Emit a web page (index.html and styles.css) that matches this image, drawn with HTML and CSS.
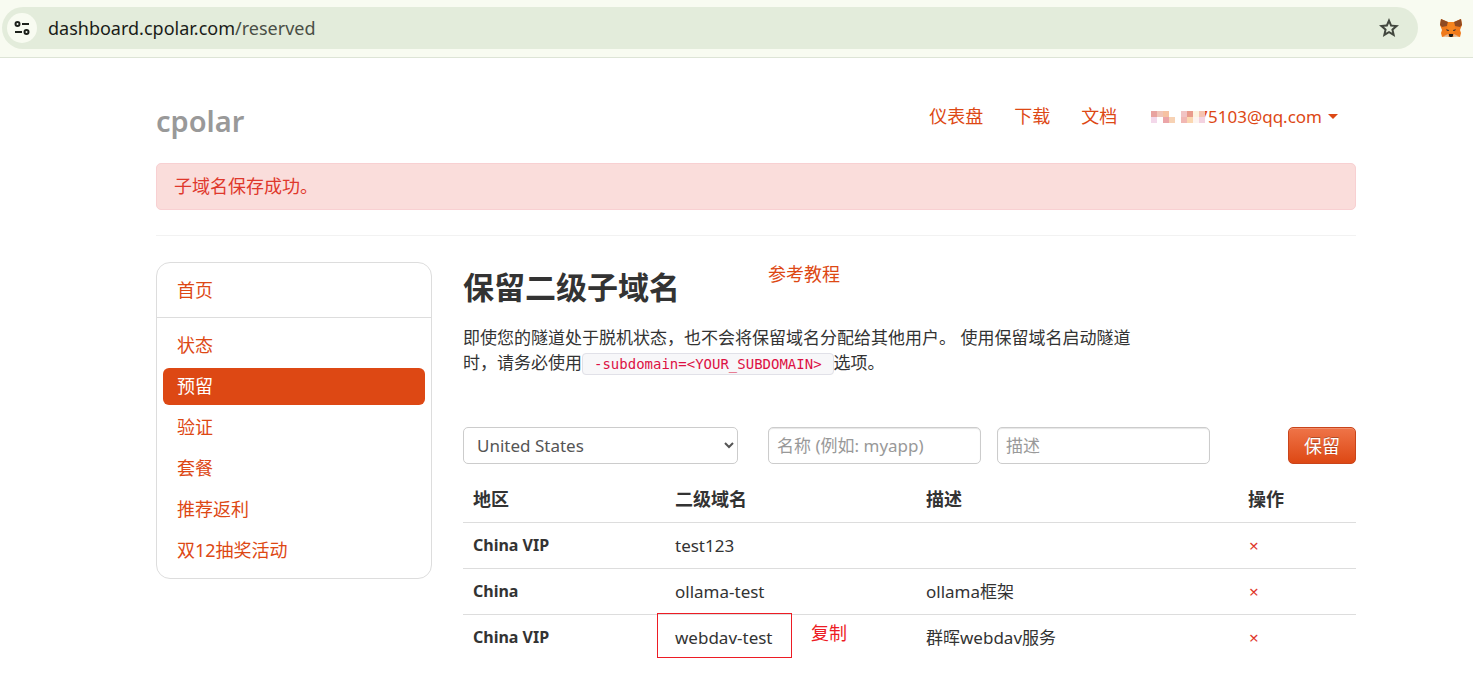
FILE: index.html
```html
<!DOCTYPE html>
<html lang="zh-CN">
<head>
  <meta charset="UTF-8">
  <title>cpolar - 保留二级子域名</title>
  <link rel="stylesheet" href="styles.css">
</head>
<body>
  <div class="browser-bar">
    <div class="address">
      <button type="button" class="site-info" aria-label="查看网站信息">
        <svg width="16" height="16" viewBox="0 0 16 16" fill="none" stroke="#1d211b" stroke-width="2">
          <circle cx="3.5" cy="4" r="2"/>
          <path d="M8 4h7M1 12h7"/>
          <circle cx="12.5" cy="12" r="2"/>
        </svg>
      </button>
      <span class="url">dashboard.cpolar.com<span class="path">/reserved</span></span>
      <button type="button" class="star" aria-label="添加书签">
        <svg width="24" height="24" viewBox="0 0 24 24" fill="#43483f">
          <path d="M8.85 16.83L12 14.93l3.15 1.92-.83-3.6 2.78-2.4-3.65-.32L12 7.13l-1.45 3.37-3.65.33 2.78 2.42zM5.83 21l1.62-7.03L2 9.25l7.2-.63L12 2l2.8 6.63 7.2.62-5.45 4.73L18.18 21 12 17.28z"/>
        </svg>
      </button>
    </div>
    <svg class="fox" width="22" height="20" viewBox="0 0 22 20">
      <path fill="#f07a1c" d="M1 1l7 3h6l7-3 1 6-2 5 1 3-1 4-5-1-2 1H9l-2-1-5 1-1-4 1-3-2-5z"/>
      <path fill="#8f4a22" d="M1 1l7 3-1 4-5 1-2-2zM21 1l-7 3 1 4 5 1 2-2z"/>
      <path fill="#f5841f" d="M8 4h6l1 7-2 4H9l-2-4z"/>
      <path fill="#e3b48f" d="M8 16l1 2-2 1-3-1zM14 16l-1 2 2 1 3-1z"/>
      <path fill="#5a3d30" d="M6 11l3 1v1H7zM16 11l-3 1v1h2z"/>
      <path fill="#1f1a17" d="M9 16h4v2l-1 1h-2l-1-1z"/>
    </svg>
  </div>

  <div class="page">
    <div class="container">
      <header class="header">
        <a class="logo" href="#">cpolar</a>
        <nav class="nav">
          <a href="#">仪表盘</a>
          <a href="#">下载</a>
          <a href="#">文档</a>
          <a class="account" href="#">
            <svg class="mosaic" width="54" height="12" shape-rendering="crispEdges">
              <path fill="#e8a3a0" d="M0 0h6v6H0z"/>
              <path fill="#f1c5b8" d="M6 0h6v6H6z"/>
              <path fill="#f6c2a2" d="M12 0h6v6h-6z"/>
              <path fill="#f3d8ea" d="M0 6h6v6H0z"/>
              <path fill="#eba5a8" d="M12 6h6v6h-6z"/>
              <path fill="#f7d2b4" d="M18 6h6v6h-6z"/>
              <path fill="#f1c4c4" d="M30 0h6v6h-6z"/>
              <path fill="#e99c8c" d="M36 0h6v6h-6z"/>
              <path fill="#fdf3df" d="M42 0h6v6h-6z"/>
              <path fill="#f5c3b0" d="M48 0h6v6h-6z"/>
              <path fill="#f1b7b3" d="M30 6h6v6h-6z"/>
              <path fill="#fad7b0" d="M36 6h6v6h-6z"/>
              <path fill="#fdf4f0" d="M42 6h6v6h-6z"/>
              <path fill="#f3d2e0" d="M48 6h6v6h-6z"/>
            </svg>
            <span class="mail">75103@qq.com</span>
            <span class="caret"></span>
          </a>
        </nav>
      </header>

      <div class="alert">子域名保存成功。</div>
      <hr>

      <div class="columns">
        <aside class="sidebar">
          <ul>
            <li><a href="#">首页</a></li>
          </ul>
          <ul>
            <li><a href="#">状态</a></li>
            <li><a class="active" href="#">预留</a></li>
            <li><a href="#">验证</a></li>
            <li><a href="#">套餐</a></li>
            <li><a href="#">推荐返利</a></li>
            <li><a href="#">双12抽奖活动</a></li>
          </ul>
        </aside>

        <main class="content">
          <div class="title-row">
            <h2>保留二级子域名</h2>
            <a href="#">参考教程</a>
          </div>
          <p class="intro">即使您的隧道处于脱机状态，也不会将保留域名分配给其他用户。 使用保留域名启动隧道<br>时，请务必使用<code>-subdomain=&lt;YOUR_SUBDOMAIN&gt;</code>选项。</p>

          <form class="reserve-form">
            <select aria-label="地区">
              <option>United States</option>
              <option>China</option>
              <option>China VIP</option>
            </select>
            <input type="text" aria-label="名称" placeholder="名称 (例如: myapp)">
            <input type="text" aria-label="描述" placeholder="描述">
            <button type="submit">保留</button>
          </form>

          <table>
            <thead>
              <tr>
                <th class="col-region">地区</th>
                <th class="col-name">二级域名</th>
                <th class="col-desc">描述</th>
                <th>操作</th>
              </tr>
            </thead>
            <tbody>
              <tr>
                <th>China VIP</th>
                <td>test123</td>
                <td></td>
                <td><a class="remove" href="#">×</a></td>
              </tr>
              <tr>
                <th>China</th>
                <td>ollama-test</td>
                <td>ollama框架</td>
                <td><a class="remove" href="#">×</a></td>
              </tr>
              <tr>
                <th>China VIP</th>
                <td class="marked">webdav-test<span class="mark-box"></span><span class="mark-note">复制</span></td>
                <td>群晖webdav服务</td>
                <td><a class="remove" href="#">×</a></td>
              </tr>
            </tbody>
          </table>
        </main>
      </div>
    </div>
  </div>
</body>
</html>
```
FILE: styles.css
```css
* {
  box-sizing: border-box;
}
body {
  margin: 0;
  background: #fff;
  color: #333;
  font-family: "Noto Sans", "Noto Sans CJK SC", sans-serif;
  font-size: 17px;
  line-height: 25px;
}
a {
  color: #dd4814;
  text-decoration: none;
}
input, select, button {
  font-family: inherit;
  font-size: 17px;
}

/* browser toolbar */
.browser-bar {
  display: flex;
  align-items: center;
  gap: 22px;
  height: 58px;
  padding: 0 11px 1px 2px;
  background: #f8fbf1;
  border-bottom: 1px solid #dde4d6;
}
.address {
  flex: 1;
  display: flex;
  align-items: center;
  height: 42px;
  padding: 0 17px 0 5px;
  border-radius: 21px;
  background: #e3ecdb;
}
.site-info, .star {
  display: flex;
  align-items: center;
  justify-content: center;
  padding: 0;
  border: none;
  background: none;
}
.site-info {
  width: 30px;
  height: 30px;
  border-radius: 50%;
  background: #f8fbf1;
}
.url {
  flex: 1;
  margin-left: 11px;
  font-size: 18px;
  color: #1a1c18;
}
.path {
  color: #4a4f46;
}

/* page */
.page {
  padding-left: 39px;
}
.container {
  max-width: 1200px;
  margin: 0 auto;
}
.header {
  display: flex;
  justify-content: space-between;
  height: 105px;
  padding: 46px 18px 0 0;
}
.logo {
  font-size: 29px;
  font-weight: 600;
  line-height: 34px;
  color: #999;
}
.nav {
  display: flex;
  gap: 31px;
}
.nav a {
  font-size: 18px;
}
.nav .account {
  display: flex;
  align-items: center;
  height: 25px;
  margin-left: 3px;
  font-size: 17px;
}
.mosaic {
  position: relative;
  z-index: 1;
  margin-right: -7px;
}
.caret {
  margin-left: 6px;
  border: 5px solid transparent;
  border-top-color: #dd4814;
  border-bottom: 0;
}
.alert {
  padding: 10px 17px;
  border: 1px solid #f8d0d2;
  border-radius: 5px;
  background: #fadddb;
  color: #df382c;
  font-size: 18px;
}
hr {
  margin: 25px 0 26px;
  border: none;
  border-top: 1px solid #f2f2f2;
}
.columns {
  display: flex;
  align-items: flex-start;
  gap: 31px;
}

.sidebar {
  width: 276px;
  border: 1px solid #ddd;
  border-radius: 14px;
  font-size: 18px;
}
.sidebar ul {
  display: flex;
  flex-direction: column;
  gap: 4px;
  margin: 0;
  padding: 9px 6px 8px;
  list-style: none;
}
.sidebar ul + ul {
  padding-bottom: 9px;
  border-top: 1px solid #ddd;
}
.sidebar a {
  display: block;
  padding: 6px 14px;
  border-radius: 6px;
}
.sidebar .active {
  background: #dd4814;
  color: #fff;
}

.content {
  flex: 1;
}
.title-row {
  display: flex;
}
h2 {
  width: 305px;
  margin: 5px 0 18px;
  font-size: 31px;
  line-height: 40px;
}
.title-row a {
  font-size: 18px;
}
.intro {
  margin: 0;
}
code {
  padding: 2px 11px;
  border: 1px solid #e1e1e8;
  border-radius: 4px;
  background: #f7f7f9;
  color: #dd1144;
  font-family: "DejaVu Sans Mono", monospace;
  font-size: 14px;
}

.reserve-form {
  display: flex;
  margin-top: 50px;
}
.reserve-form select,
.reserve-form input {
  height: 37px;
  border: 1px solid #ccc;
  border-radius: 5px;
  background-color: #fff;
  color: #555;
}
.reserve-form select {
  width: 275px;
  margin-right: 30px;
  padding: 0 9px;
}
.reserve-form input {
  width: 213px;
  margin-right: 16px;
  padding: 0 8px;
  box-shadow: inset 0 1px 1px rgba(0, 0, 0, 0.1);
}
.reserve-form input::placeholder {
  color: #999;
}
.reserve-form button {
  width: 68px;
  height: 37px;
  margin-left: auto;
  padding: 0 0 2px;
  border: 1px solid #c9441a;
  border-radius: 5px;
  background: linear-gradient(#ef7448, #dd4814);
  box-shadow: inset 0 1px 0 rgba(255, 255, 255, 0.2);
  color: #fff;
  font-size: 18px;
  text-shadow: 0 -1px 0 rgba(0, 0, 0, 0.25);
}

table {
  width: 100%;
  margin-top: 13px;
  border-collapse: collapse;
  table-layout: fixed;
}
th, td {
  height: 46px;
  padding: 0 10px;
  text-align: left;
}
tbody tr {
  border-top: 1px solid #ddd;
}
tbody th {
  font-size: 16px;
}
thead th {
  height: 45px;
  font-size: 18px;
}
.col-region {
  width: 202px;
}
.col-name {
  width: 251px;
}
.col-desc {
  width: 322px;
}
.remove {
  margin-left: 1px;
  color: #df382c;
}

/* red frame and note drawn over the last row */
.marked {
  position: relative;
}
.mark-box {
  position: absolute;
  top: -2px;
  left: -8px;
  width: 135px;
  height: 45px;
  border: 1px solid #ed1c24;
}
.mark-note {
  position: absolute;
  top: 6px;
  left: 146px;
  color: #ed1c24;
  font-size: 18px;
}
```
